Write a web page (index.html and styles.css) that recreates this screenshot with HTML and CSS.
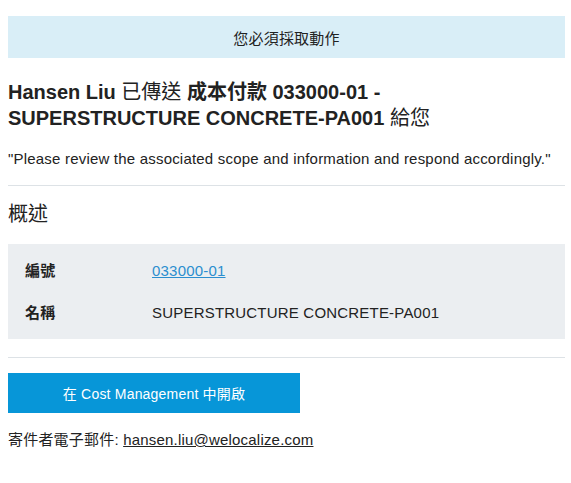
FILE: index.html
```html
<!DOCTYPE html>
<html lang="zh-Hant">
  <head>
    <meta charset="UTF-8" />
    <meta name="viewport" content="width=device-width, initial-scale=1.0" />
    <title>您必須採取動作</title>
    <link rel="stylesheet" href="styles.css">
  </head>
  <body>
    <div class="mail">
      <div class="notice">您必須採取動作</div>

      <h1 class="title"><strong>Hansen Liu</strong> 已傳送 <strong>成本付款 033000-01 - SUPERSTRUCTURE CONCRETE-PA001</strong> 給您</h1>

      <p class="quote">"Please review the associated scope and information and respond accordingly."</p>

      <hr class="rule" />

      <h2 class="section">概述</h2>

      <div class="summary">
        <div class="row">
          <div class="label">編號</div>
          <div class="value"><a href="#">033000-01</a></div>
        </div>
        <div class="row">
          <div class="label">名稱</div>
          <div class="value">SUPERSTRUCTURE CONCRETE-PA001</div>
        </div>
      </div>

      <hr class="rule rule-after" />

      <a class="button" href="#">在 Cost Management 中開啟</a>

      <p class="sender">寄件者電子郵件: <a href="#">hansen.liu@welocalize.com</a></p>
    </div>
  </body>
</html>
```

FILE: styles.css
```css
:root {
  --text-color: #222222;
  --notice-bg: #d9eef7;
  --summary-bg: #ebeef1;
  --rule-color: #dde2e6;
  --link-color: #2b8ecf;
  --button-bg: #0796d8;
}

* {
  margin: 0;
  padding: 0;
  box-sizing: border-box;
}

body {
  background: #fff;
  color: var(--text-color);
  font-family: 'Liberation Sans', Arial, 'Noto Sans CJK TC', sans-serif;
  font-size: 15px;
  letter-spacing: 0.2px;
}

.mail {
  width: 557px;
  margin: 16px 0 0 8px;
}

.notice {
  height: 42px;
  display: flex;
  align-items: center;
  justify-content: center;
  background-color: var(--notice-bg);
}

.title {
  margin-top: 21px;
  font-size: 20px;
  line-height: 26px;
  font-weight: normal;
  letter-spacing: 0;
}

.title strong {
  font-weight: bold;
}

.quote {
  margin-top: 18px;
  line-height: 20px;
}

.rule {
  border: none;
  border-top: 1px solid var(--rule-color);
  margin-top: 16px;
}

.section {
  margin-top: 16px;
  font-size: 20px;
  line-height: 24px;
  font-weight: normal;
  letter-spacing: 0;
}

.summary {
  margin-top: 18px;
  background-color: var(--summary-bg);
  padding: 17px 17px 16px;
  display: flex;
  flex-direction: column;
  gap: 22px;
}

.row {
  display: flex;
  line-height: 20px;
}

.label {
  width: 127px;
  font-weight: bold;
}

.value a {
  color: var(--link-color);
}

.rule-after {
  margin-top: 18px;
}

.button {
  display: flex;
  align-items: center;
  justify-content: center;
  width: 292px;
  height: 40px;
  margin-top: 15px;
  background-color: var(--button-bg);
  color: #fff;
  text-decoration: none;
  font-size: 14px;
}

.sender {
  margin-top: 17px;
  line-height: 20px;
}

.sender a {
  color: var(--text-color);
}
```
